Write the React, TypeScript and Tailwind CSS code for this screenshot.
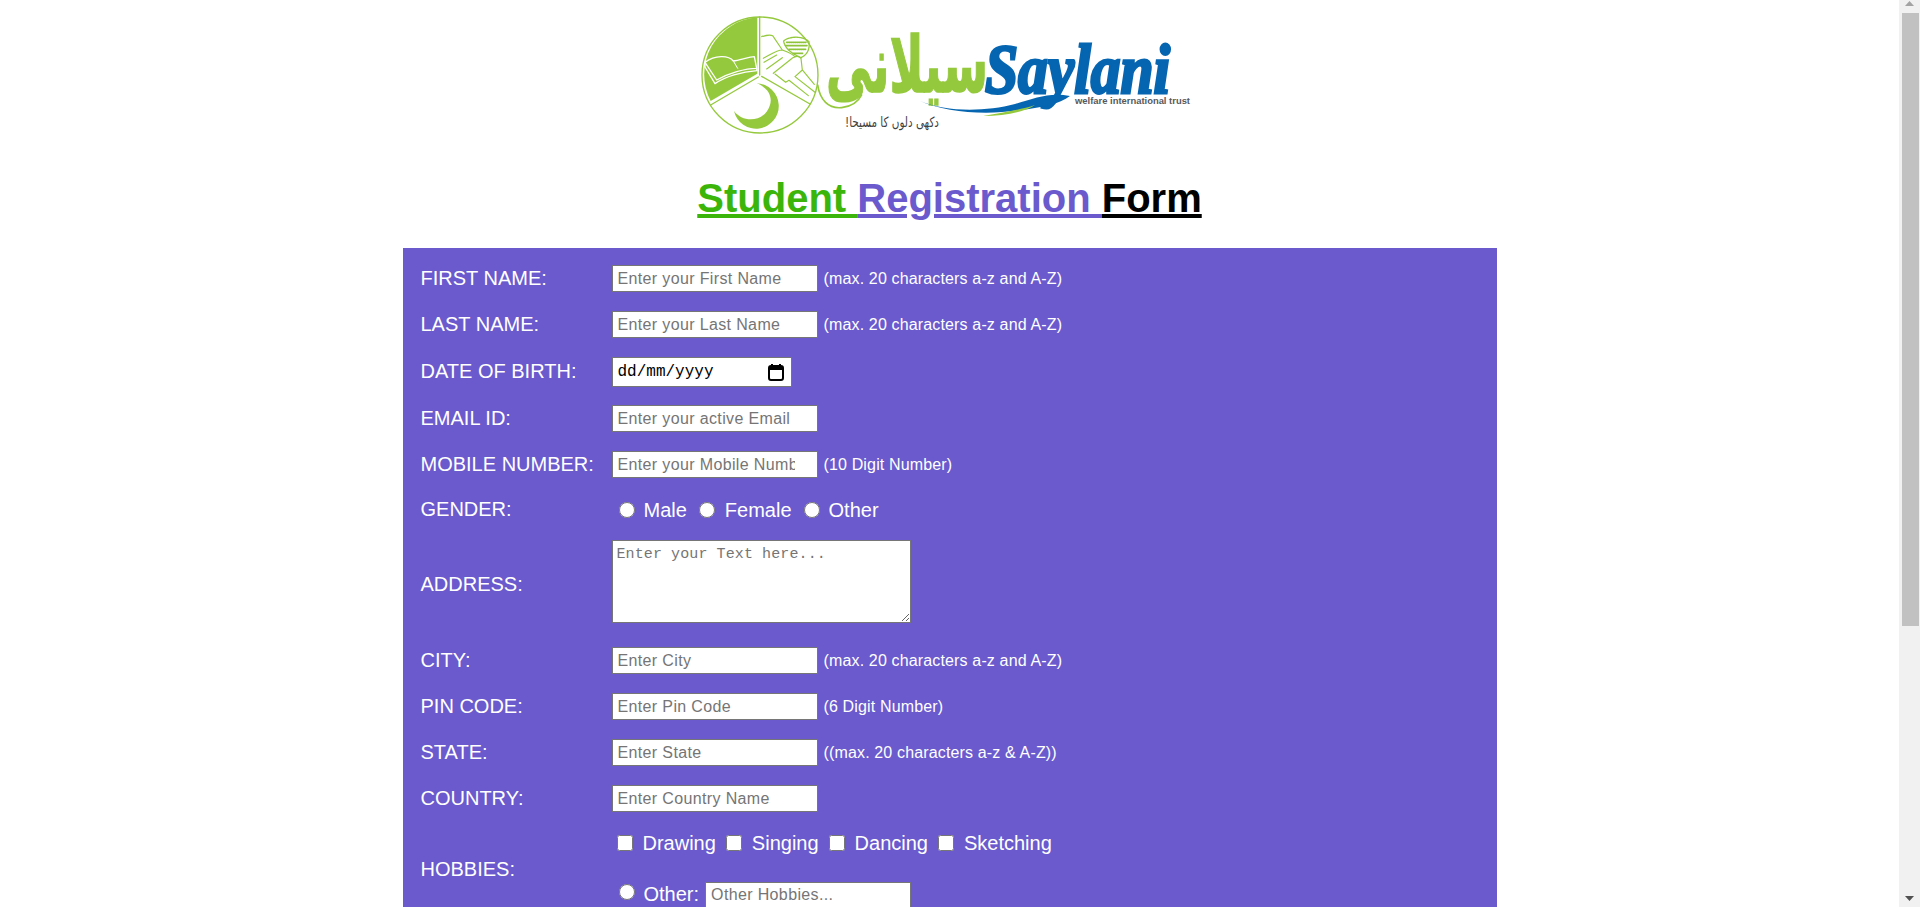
const fieldClass =
  "box-border block h-[27px] w-[206px] border border-[#767676] bg-white pl-[5px] pr-[22px] text-[16px] tracking-[0.36px] text-black outline-none placeholder:text-[#757575]";

// one row of the form: label on the left, field and hint on the right
function Row({
  label,
  placeholder,
  hint,
}: {
  label: string;
  placeholder: string;
  hint?: string;
}) {
  return (
    <div className="flex">
      <div className="flex w-[191px] items-center pb-[3px] text-[20px]">{label}</div>
      <div className="flex items-center pb-[10px] pt-[9px]">
        <input type="text" placeholder={placeholder} className={fieldClass} />
        {hint && <span className="ml-[6px] text-[16px] tracking-[0.15px]">{hint}</span>}
      </div>
    </div>
  );
}

function Logo() {
  return (
    <svg width="511" height="135" viewBox="694 5 511 135" className="block shrink-0" aria-label="Saylani logo">
      <g transform="translate(695 5) scale(0.3333)" fill="none" stroke="#95c93d" strokeLinecap="round" strokeLinejoin="round">
        <circle cx="195" cy="210" r="174" strokeWidth="4" />
        <path d="M187,37 L187,206 L47,288 A172,172 0 0 1 187,37 Z" fill="#95c93d" stroke="none" />
        <path d="M194,36 L194,210 M200,214 L345,297 M190,216 L47,300" strokeWidth="4" />
        {/* book */}
        <path d="M30,172 C60,150 100,150 115,168 C135,165 165,155 178,155 L185,190 C150,190 100,205 65,225 Z" stroke="#fff" strokeWidth="4" />
        <path d="M30,172 L30,186 L60,236 C90,215 140,200 186,197 L185,190" stroke="#fff" strokeWidth="4" />
        <path d="M115,168 L128,190" stroke="#fff" strokeWidth="3" />
        {/* hands and grain */}
        <path d="M200,95 C215,90 225,88 233,92 L262,135 C275,140 290,145 300,155 M205,160 C225,150 245,135 262,135 M207,172 L245,150 M215,192 L262,158 M235,205 L285,165 M285,165 C295,155 310,150 318,160 L322,195 L358,238 M240,207 L272,232 L282,226 L340,272 M322,195 L300,215 L360,262" strokeWidth="3.5" />
        <path d="M266,108 C280,95 320,90 342,110 C345,135 335,150 318,158 C300,150 270,135 266,108 Z" strokeWidth="4" strokeDasharray="4 2" />
        <path d="M275,112 L335,112 M272,122 L338,122 M282,133 L332,133 M295,145 L325,145" stroke="#8fc43a" strokeWidth="5" strokeDasharray="4 2" />
        {/* crescent */}
        <path d="M185,235 A68,68 0 1 1 117,318 C140,350 190,352 215,320 C240,285 225,250 185,235 Z" fill="#95c93d" stroke="none" />
        {/* tail of the urdu word */}
        <path d="M368,240 C375,285 400,312 440,308 C470,305 490,290 500,270" strokeWidth="5" />
      </g>
      <text x="826" y="92" fontFamily="'DejaVu Sans', sans-serif" fontWeight="700" fontSize="78" fill="#95c93d" stroke="#95c93d" strokeWidth="1.5" textLength="162" lengthAdjust="spacingAndGlyphs" direction="rtl" textAnchor="end">
        سیلانی
      </text>
      <text x="985" y="93" fontFamily="'Liberation Serif', serif" fontWeight="700" fontStyle="italic" fontSize="70" fill="#0565b0" stroke="#0565b0" strokeWidth="3" textLength="185" lengthAdjust="spacingAndGlyphs">
        Saylani
      </text>
      <path d="M920,101 C945,112 985,112 1015,104 C1035,98 1050,92 1070,96 C1060,104 1040,108 1020,110 C985,116 945,112 920,101 Z" fill="#0565b0" />
      <path d="M983,116 C1000,113 1020,110 1035,105 C1025,112 1005,116 983,116 Z" fill="#95c93d" />
      <text x="1075" y="104" fontFamily="'Liberation Sans', sans-serif" fontWeight="700" fontSize="9.5" fill="#58595b" textLength="115" lengthAdjust="spacingAndGlyphs">
        welfare international trust
      </text>
      <text x="939" y="127" fontFamily="'DejaVu Sans', sans-serif" fontSize="14" fill="#3f3f3f" textLength="94" lengthAdjust="spacingAndGlyphs" direction="rtl">
        دکھی دلوں کا مسیحا!
      </text>
    </svg>
  );
}

function Scrollbar() {
  return (
    <aside className="flex h-full w-[21px] shrink-0 flex-col items-center bg-[#f1f1f1]">
      <svg width="9" height="5" viewBox="0 0 9 5" className="mt-px block shrink-0">
        <path d="M4.5,0 L9,5 L0,5 Z" fill="#a3a3a3" />
      </svg>
      <div className="ml-px mt-[7px] h-[613px] w-[17px] shrink-0 bg-[#c1c1c1]" />
      <svg width="9" height="5" viewBox="0 0 9 5" className="mt-[270px] block shrink-0">
        <path d="M0,0 L9,0 L4.5,5 Z" fill="#505050" />
      </svg>
    </aside>
  );
}

export default function App() {
  return (
    <div className="flex h-[907px] overflow-hidden bg-white font-['Liberation_Sans',Arial,sans-serif]">
      <main className="flex min-w-0 flex-1 flex-col items-center pt-[5px]">
        <Logo />
        <h1 className="mt-[35px] shrink-0 text-[40px] font-bold leading-[46px]">
          <span className="text-[#3cb50a] underline">Student </span>
          <span className="text-[#6a5acd] underline">Registration </span>
          <span className="text-black underline">Form</span>
        </h1>

        <form className="mt-[27px] w-[1094px] shrink-0 bg-[#6a5acd] pl-[18px] pt-2 text-white">
          <Row label="FIRST NAME:" placeholder="Enter your First Name" hint="(max. 20 characters a-z and A-Z)" />
          <Row label="LAST NAME:" placeholder="Enter your Last Name" hint="(max. 20 characters a-z and A-Z)" />

          <div className="flex">
            <div className="flex w-[191px] items-center pb-[2px] text-[20px]">DATE OF BIRTH:</div>
            <div className="pb-[9px] pt-[9px]">
              <div className="box-border flex h-[30px] w-[180px] items-center justify-between border border-[#767676] bg-white pl-[5px] pr-[6px] font-['Liberation_Mono',monospace] text-[16px] text-black">
                <span className="whitespace-pre">dd/mm/yyyy</span>
                <svg width="18" height="18" viewBox="0 0 18 18">
                  <path d="M5,1 V3 M13,1 V3" stroke="#000" strokeWidth="2" />
                  <rect x="2" y="3" width="14" height="14" rx="2" fill="none" stroke="#000" strokeWidth="2" />
                  <rect x="2" y="3" width="14" height="4" fill="#000" />
                </svg>
              </div>
            </div>
          </div>

          <Row label="EMAIL ID:" placeholder="Enter your active Email" />
          <Row label="MOBILE NUMBER:" placeholder="Enter your Mobile Number" hint="(10 Digit Number)" />

          <div className="flex h-[43px]">
            <div className="flex w-[191px] items-center pb-[2px] text-[20px]">GENDER:</div>
            <div className="flex items-center text-[20px]">
              <input type="radio" name="gender" className="m-0 ml-[7px] size-4" />
              <span className="ml-[9px]">Male</span>
              <input type="radio" name="gender" className="m-0 ml-[12px] size-4" />
              <span className="ml-[10px]">Female</span>
              <input type="radio" name="gender" className="m-0 ml-[12px] size-4" />
              <span className="ml-[9px]">Other</span>
            </div>
          </div>

          <div className="flex">
            <div className="flex w-[191px] items-center pb-[2px] text-[20px]">ADDRESS:</div>
            <div className="pb-[15px] pt-[9px]">
              <textarea
                placeholder="Enter your Text here..."
                className="box-border block h-[83px] w-[299px] border border-[#767676] bg-white px-1 py-[3px] font-['Liberation_Mono',monospace] text-[15px] tracking-[0.1px] text-black outline-none placeholder:text-[#757575]"
              />
            </div>
          </div>

          <Row label="CITY:" placeholder="Enter City" hint="(max. 20 characters a-z and A-Z)" />
          <Row label="PIN CODE:" placeholder="Enter Pin Code" hint="(6 Digit Number)" />
          <Row label="STATE:" placeholder="Enter State" hint="((max. 20 characters a-z & A-Z))" />
          <Row label="COUNTRY:" placeholder="Enter Country Name" />

          <div className="flex">
            <div className="flex w-[191px] items-center text-[20px]">HOBBIES:</div>
            <div className="text-[20px]">
              <div className="flex h-[42px] items-center">
                <input type="checkbox" className="m-0 ml-[5px] size-4" />
                <span className="ml-[10px]">Drawing</span>
                <input type="checkbox" className="m-0 ml-[10px] size-4" />
                <span className="ml-[10px]">Singing</span>
                <input type="checkbox" className="m-0 ml-[10px] size-4" />
                <span className="ml-[10px]">Dancing</span>
                <input type="checkbox" className="m-0 ml-[10px] size-4" />
                <span className="ml-[10px]">Sketching</span>
              </div>
              <div className="flex items-center pb-[5px] pt-[15px]">
                <input type="radio" name="other" className="m-0 mb-[6px] ml-[7px] size-4" />
                <span className="mb-[2px] ml-[9px]">Other:</span>
                <input type="text" placeholder="Other Hobbies..." className={`${fieldClass} ml-[6px]`} />
              </div>
            </div>
          </div>
        </form>
      </main>
      <Scrollbar />
    </div>
  );
}
